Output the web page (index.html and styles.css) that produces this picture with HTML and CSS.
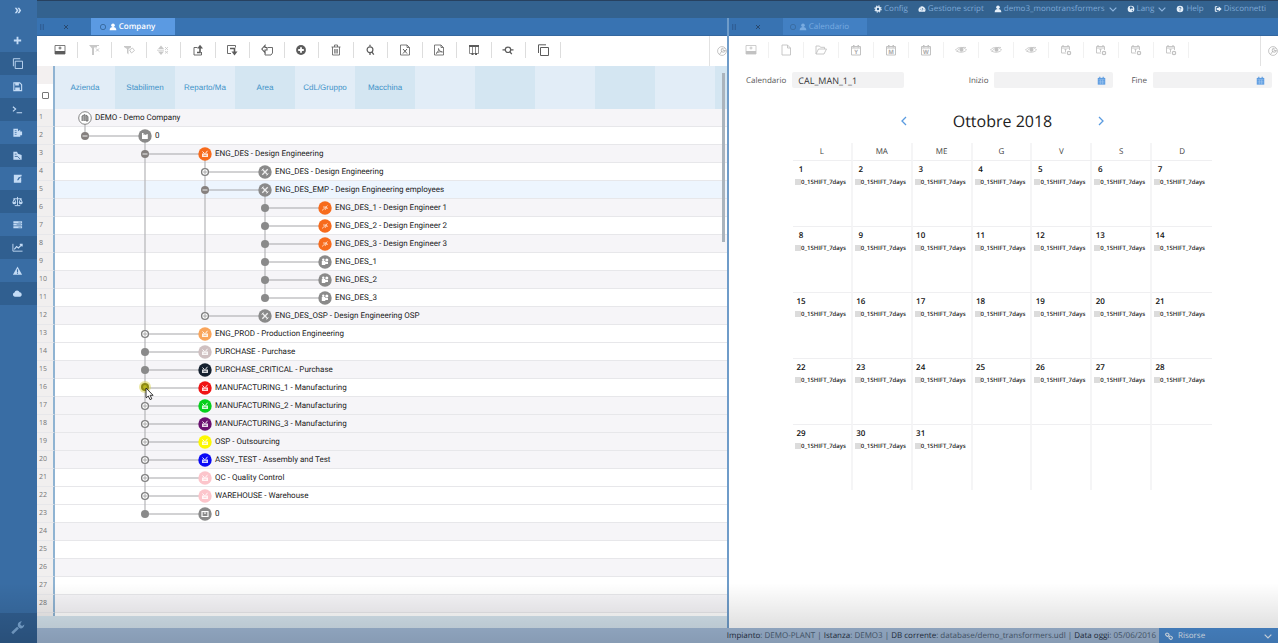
FILE: index.html
```html
<!DOCTYPE html>
<html lang="it">
<head>
    <meta charset="UTF-8">
    <meta name="viewport" content="width=device-width, initial-scale=1.0">
    <title>Company</title>
    <link rel="stylesheet" href="styles.css">
</head>
<body>

    <!-- Icon set -->
    <svg class="sprite" aria-hidden="true">
        <symbol id="i-expand" viewBox="0 0 12 12"><path d="M3 3h2l2 3-2 3H3l2-3zM6 3h2l2 3-2 3H6l2-3z" fill="currentColor"/></symbol>
        <symbol id="i-plus" viewBox="0 0 12 12"><path d="M5 2h2v3h3v2H7v3H5V7H2V5h3z" fill="currentColor"/></symbol>
        <symbol id="i-copy" viewBox="0 0 12 12"><path d="M3.500 3.500h8v8h-8zM1.500 9V.8H9" fill="none" stroke="currentColor"/></symbol>
        <symbol id="i-save" viewBox="0 0 12 12"><path d="M2 2h6.500L10.500 4v6.500H2z" fill="none" stroke="currentColor" stroke-width="1.200"/><path d="M3.500 2h4v3h-4zM3.500 7h5v3.500h-5z" fill="currentColor"/></symbol>
        <symbol id="i-term" viewBox="0 0 12 12"><path d="M1 3l3 2.500L1 8M5 9.500h6" fill="none" stroke="currentColor" stroke-width="1.200"/></symbol>
        <symbol id="i-plant" viewBox="0 0 12 12"><path d="M1.500 2h5v2.500L9 3v2h2v4H9v1.500H1.500z" fill="currentColor"/><path d="M3 4h2M3 6h2M3 8h2" stroke="#3a6ea6" stroke-width=".8"/></symbol>
        <symbol id="i-plantedit" viewBox="0 0 12 12"><path d="M1.500 2h4l1 2 4 1.500V10.500h-9z" fill="currentColor"/><path d="M3 4.500h2M3 7h3l3 3" stroke="#33608f" stroke-width=".9" fill="none"/></symbol>
        <symbol id="i-doc" viewBox="0 0 12 12"><path d="M2 2h8.500v1.500L7 5l-1.500 3H10v2.500H2z" fill="currentColor"/><path d="M7 8l2-3h1v4H7z" fill="currentColor"/></symbol>
        <symbol id="i-scale" viewBox="0 0 12 12"><path d="M6 1v9M3 10.500h6M1.500 3h9M2.500 3L.8 7h3.400zM9.500 3L7.800 7h3.400z" fill="none" stroke="currentColor"/><path d="M.5 7h4a2 2 0 0 1-4 0M7.500 7h4a2 2 0 0 1-4 0" fill="currentColor"/></symbol>
        <symbol id="i-server" viewBox="0 0 12 12"><path d="M1.500 2.500h9.500v2H1.500zM1.500 5.200h9.500v2H1.500zM1.500 8h9.500v2H1.500z" fill="currentColor"/><path d="M7 3.500h3M5 6.200h5M7 9h3" stroke="#3a6ea6" stroke-width=".6"/></symbol>
        <symbol id="i-chart" viewBox="0 0 12 12"><path d="M1 2v8h10.500" fill="none" stroke="currentColor"/><path d="M2.500 8L5 5l2 1.500L10.500 3M8.500 2.500H11V5" fill="none" stroke="currentColor" stroke-width="1.300"/></symbol>
        <symbol id="i-warn" viewBox="0 0 12 12"><path d="M6 1.500l5 9H1z" fill="currentColor"/><path d="M6 4.500v3M6 8.300v1.200" stroke="#3a6ea6" stroke-width="1.200"/></symbol>
        <symbol id="i-cloud" viewBox="0 0 12 12"><path d="M3 9.500a2.300 2.300 0 0 1-.3-4.500 3 3 0 0 1 5.600-.5A2.600 2.600 0 0 1 9 9.500z" fill="currentColor"/></symbol>
        <symbol id="i-wrench" viewBox="0 0 12 12"><path d="M1 10.500L6 5.700" stroke="currentColor" stroke-width="2.200" fill="none"/><path d="M11.500 3L9.500 4.300 8 3.200 8.300 1.500 9.500.5C7 0 5.300 2 6 4.500 7 7.300 11 7 11.500 3z" fill="currentColor"/></symbol>
        <symbol id="i-user" viewBox="0 0 12 12"><circle cx="6" cy="3.500" r="2.700" fill="currentColor"/><path d="M1 11c0-4 2-5 5-5s5 1 5 5z" fill="currentColor"/></symbol>
        <symbol id="i-gear" viewBox="0 0 12 12"><circle cx="6" cy="6" r="3" fill="none" stroke="currentColor" stroke-width="2.400"/><circle cx="6" cy="6" r="4.700" fill="none" stroke="currentColor" stroke-width="1.600" stroke-dasharray="1.900 1.800"/></symbol>
        <symbol id="i-gauge" viewBox="0 0 12 12"><path d="M1.500 10a5.200 5.200 0 1 1 9 0z" fill="currentColor"/><path d="M6 8.500l1-4M3 6.500h1M8.500 6.500h1M4 4l.7.7" stroke="#33628f" stroke-width="1"/></symbol>
        <symbol id="i-globe" viewBox="0 0 12 12"><circle cx="6" cy="6" r="5" fill="currentColor"/><path d="M4 3l2-1 3 2-1 2-2-1-1 2zM7 8l2-1-1 3z" fill="#33628f"/></symbol>
        <symbol id="i-help" viewBox="0 0 12 12"><circle cx="6" cy="6" r="5" fill="currentColor"/><path d="M4.500 4.800C4.500 2.800 7.600 3 7.500 4.700 7.400 5.800 6 5.800 6 7M6 8v1.300" fill="none" stroke="#33628f" stroke-width="1.200"/></symbol>
        <symbol id="i-exit" viewBox="0 0 12 12"><path d="M5 2.500H2v7h3" fill="none" stroke="currentColor" stroke-width="1.500"/><path d="M4 4.500h3V2l4.500 4L7 10V7.500H4z" fill="currentColor"/></symbol>
        <symbol id="i-down" viewBox="0 0 12 12"><path d="M1 4l5 5 5-5" fill="none" stroke="currentColor" stroke-width="1.800"/></symbol>
        <symbol id="i-left" viewBox="0 0 12 12"><path d="M8 2L4 6 8 10" fill="none" stroke="currentColor" stroke-width="1.300"/></symbol>
        <symbol id="i-right" viewBox="0 0 12 12"><path d="M4 2l4 4-4 4" fill="none" stroke="currentColor" stroke-width="1.300"/></symbol>
        <symbol id="i-close" viewBox="0 0 12 12"><path d="M3 3l6 6M9 3L3 9" stroke="currentColor" stroke-width="1.500"/></symbol>
        <symbol id="i-grip" viewBox="0 0 12 12"><path d="M3 2h2v2H3zM7 2h2v2H7zM3 5h2v2H3zM7 5h2v2H7zM3 8h2v2H3zM7 8h2v2H7z" fill="currentColor"/></symbol>
        <symbol id="i-ring" viewBox="0 0 12 12"><circle cx="6" cy="6" r="4" fill="none" stroke="currentColor" stroke-width="1.500"/></symbol>
        <symbol id="i-link" viewBox="0 0 12 12"><rect x="1" y="2" width="5" height="4" rx="1.800" transform="rotate(40 3.500 4)" fill="none" stroke="currentColor" stroke-width="1.600"/><rect x="6" y="6.500" width="5" height="4" rx="1.800" transform="rotate(40 8.500 8.500)" fill="none" stroke="currentColor" stroke-width="1.600"/><path d="M5 5l2.500 2.500" stroke="currentColor" stroke-width="1.400"/></symbol>
        <symbol id="i-tray" viewBox="0 0 12 12"><path d="M1 1.500h10v8.500H1z" fill="none" stroke="currentColor" stroke-width=".8"/><path d="M1 7h10v3H1z" fill="currentColor"/><path d="M6 2.500v3M4.500 4h3" stroke="currentColor" stroke-width=".9"/></symbol>
        <symbol id="i-filter" viewBox="0 0 12 12"><path d="M1 1h8v2.500H6V11H4V4.500z" fill="currentColor"/><path d="M8 4.500l3 3M11 4.500l-3 3M9 1.500h2" stroke="currentColor"/></symbol>
        <symbol id="i-filter2" viewBox="0 0 12 12"><path d="M1 2h7v1.500L5.500 5v5.500L4 9V5L1 3z" fill="currentColor"/><path d="M6.500 6l3-2 2 2.500-3 2.500z" fill="none" stroke="currentColor"/></symbol>
        <symbol id="i-collapse" viewBox="0 0 12 12"><path d="M1 5l3-3.500L7 5zM1 7.500h6L4 11z" fill="currentColor"/><path d="M8 3l3 3M11 3L8 6M8 7l3 2.500M11 7L8 9.500M0 6.200h7" stroke="currentColor" stroke-width=".8"/></symbol>
        <symbol id="i-outup" viewBox="0 0 12 12"><path d="M5.500 3.500H2v7.500h7.500V8" fill="none" stroke="currentColor" stroke-width=".9"/><path d="M5 8.500h3V4" fill="none" stroke="currentColor" stroke-width="1.600"/><path d="M5.200 4.500L8 .8 11 4.500z" fill="currentColor"/></symbol>
        <symbol id="i-indown" viewBox="0 0 12 12"><path d="M5 9.500H1.500V1.500H9.500v2" fill="none" stroke="currentColor" stroke-width=".9"/><path d="M4 4.500h4.500V8" fill="none" stroke="currentColor" stroke-width="1.600"/><path d="M5.500 7.500h6L8.500 11.500z" fill="currentColor"/></symbol>
        <symbol id="i-swap" viewBox="0 0 12 12"><path d="M7 3.500h4.500V9L10 11H4V8.500" fill="none" stroke="currentColor" stroke-width=".9"/><path d="M.8 5L4 1.500V3.500h2v2.500H4v2.500z" fill="none" stroke="currentColor" stroke-width="1.100"/></symbol>
        <symbol id="i-add" viewBox="0 0 12 12"><circle cx="6" cy="6" r="4.900" fill="currentColor"/><path d="M6 3.200v5.600M3.200 6h5.600" stroke="#fff" stroke-width="1.800"/></symbol>
        <symbol id="i-trash" viewBox="0 0 12 12"><path d="M1.500 3h9M4.500 3V1h3v2M2.500 3v8h7V3M4.700 5v4.500M6 5v4.500M7.300 5v4.500" fill="none" stroke="currentColor" stroke-width=".8"/></symbol>
        <symbol id="i-find" viewBox="0 0 12 12"><path d="M6 .8v1.500M6 9v2M7.800 7.800l2 2.800" stroke="currentColor" stroke-width="1.300"/><circle cx="6" cy="5.800" r="2.900" fill="none" stroke="currentColor" stroke-width="1.200"/></symbol>
        <symbol id="i-xls" viewBox="0 0 12 12"><path d="M1.500 1h6.500L10.500 3.500V11h-9zM8 1v2.500h2.500" fill="none" stroke="currentColor" stroke-width=".8"/><path d="M4 5l4 4.500M8 5L4 9.500" stroke="currentColor"/></symbol>
        <symbol id="i-pdf" viewBox="0 0 12 12"><path d="M1.500 1h6.500L10.500 3.500V11h-9zM8 1v2.500h2.500M3 9.500C5.500 7.500 6 5.500 5.500 4.500 5.500 7 8 7.500 9.500 8 7 7.300 5 8 3 9.500" fill="none" stroke="currentColor" stroke-width=".8"/></symbol>
        <symbol id="i-table" viewBox="0 0 12 12"><path d="M1.500 1.500h9V9.500h-9zM4.500 2v8M7.500 2v8" fill="none" stroke="currentColor" stroke-width=".7"/><path d="M1 1h10v2H1zM3.500 9h2v2h-2zM7 9h2v2H7z" fill="currentColor"/></symbol>
        <symbol id="i-findh" viewBox="0 0 12 12"><path d="M.5 5.800h3M8.500 5.800h3M7.800 7.800l2 2.300" stroke="currentColor" stroke-width="1.300"/><circle cx="6" cy="5.800" r="2.700" fill="none" stroke="currentColor" stroke-width="1.200"/></symbol>
        <symbol id="i-ball" viewBox="0 0 12 12"><circle cx="6" cy="6" r="5.300" fill="none" stroke="currentColor" stroke-width=".8"/><path d="M3 10l3-4M9 2.500L7 4.500 8 6l2-1A2.500 2.500 0 1 1 7.500 2.500" fill="none" stroke="currentColor" stroke-width=".9"/></symbol>
        <symbol id="i-file" viewBox="0 0 12 12"><path d="M2 1h5.500L10.500 4v7H2zM7.500 1v3h3" fill="none" stroke="currentColor" stroke-width=".9"/></symbol>
        <symbol id="i-folder" viewBox="0 0 12 12"><path d="M1 10V2h3.500l1 1.300H9.500V5M1 10l2.500-5h8L9 10z" fill="none" stroke="currentColor" stroke-width=".9"/></symbol>
        <symbol id="i-cal" viewBox="0 0 12 12"><path d="M1.500 2.500h9v8.500h-9zM1.500 4h9" fill="none" stroke="currentColor"/><path d="M3 1h1.500v2.500H3zM7.500 1H9v2.500H7.500z" fill="currentColor"/></symbol>
        <symbol id="i-calfull" viewBox="0 0 12 12"><path d="M1 2.500h10v9H1z" fill="currentColor"/><path d="M3 1h1.500v2.500H3zM7.500 1H9v2.500H7.500z" fill="currentColor"/><path d="M2 4.500h8M2 7h8M2 9.200h8M4.500 5v6M7.500 5v6" stroke="#b5d3f3" stroke-width=".6"/></symbol>
        <symbol id="i-eye" viewBox="0 0 12 12"><path d="M.5 6C3 2.500 9 2.500 11.500 6 9 9 3 9 .5 6z" fill="none" stroke="currentColor" stroke-width=".8"/><circle cx="6.500" cy="5.800" r="2" fill="currentColor"/><path d="M2 7.500C4 4 7 3 11 3.500" fill="none" stroke="currentColor" stroke-width=".8"/></symbol>
        <symbol id="i-calgo" viewBox="0 0 12 12"><path d="M9.500 6V2.500h-8v6.500H6M1.500 4h8M4.500 5.500h2M5.500 5.500V8" fill="none" stroke="currentColor" stroke-width=".9"/><path d="M3 1v2M8 1v2" stroke="currentColor" stroke-width="1.100"/><circle cx="9" cy="9" r="1.700" fill="none" stroke="currentColor" stroke-width="1.200"/></symbol>

        <!-- Tree nodes, white on a disc -->
        <symbol id="n-company" viewBox="0 0 14 14"><circle cx="7" cy="7" r="6.300" fill="#fff" stroke="#777" stroke-width=".9"/><path d="M4 10V5l3-1.500V10M8 10V4l2 1.500V10z" fill="#aaa" stroke="#666" stroke-width=".8"/></symbol>
        <symbol id="n-plant" viewBox="0 0 14 14"><circle cx="7" cy="7" r="6.700" fill="currentColor"/><path d="M4 4h1.500v2L7 5.200V6l2.800-1V10H4z" fill="#fff"/></symbol>
        <symbol id="n-dept" viewBox="0 0 14 14"><circle cx="7" cy="7" r="6.700" fill="currentColor"/><path d="M4 6.500h6V10H4z" fill="#fff" opacity=".85"/><path d="M4.500 4.500l2 2M9.500 3.800L7.300 6.500" stroke="#fff" stroke-width=".9"/><path d="M5.500 7.800h3v.8h-3z" fill="currentColor"/></symbol>
        <symbol id="n-area" viewBox="0 0 14 14"><circle cx="7" cy="7" r="6.700" fill="currentColor"/><path d="M4.300 4.300l5.400 5.400M9.700 4.300L4.300 9.700" stroke="#eee" stroke-width="1.300"/><path d="M3.500 5.500l2-2M8.500 10.500l2-2" stroke="#eee" stroke-width=".8"/></symbol>
        <symbol id="n-run" viewBox="0 0 14 14"><circle cx="7" cy="7" r="6.700" fill="currentColor"/><path d="M4 9.500l5.500-5M5 6h3.500L7 9M8 7l2 .3" stroke="#ffe3d2" stroke-width=".8" fill="none"/></symbol>
        <symbol id="n-machine" viewBox="0 0 14 14"><circle cx="7" cy="7" r="6.700" fill="currentColor"/><path d="M3.800 6h3.500v4H3.800zM7.300 7H10v2H7.300z" fill="#fff"/><circle cx="5.300" cy="4.700" r="1.200" fill="#fff"/><circle cx="8.800" cy="5" r="1.500" fill="#fff"/></symbol>
        <symbol id="n-box" viewBox="0 0 14 14"><circle cx="7" cy="7" r="6.700" fill="currentColor"/><path d="M4 4.500h6v5H4z" fill="none" stroke="#fff" stroke-width="1.200"/><path d="M5.500 5.500h3L7 7.300z" fill="#fff"/></symbol>
    </svg>

    <div class="app">
        <nav class="sidebar">
            <button class="side-toggle" aria-label="Espandi"><svg><use href="#i-expand"/></svg></button>
            <div class="side-list">
                <button aria-label="Nuovo"><svg><use href="#i-plus"/></svg></button>
                <button aria-label="Copia"><svg><use href="#i-copy"/></svg></button>
                <button aria-label="Salva"><svg><use href="#i-save"/></svg></button>
                <button aria-label="Console"><svg><use href="#i-term"/></svg></button>
                <button aria-label="Impianto"><svg><use href="#i-plant"/></svg></button>
                <button aria-label="Modifica impianto"><svg><use href="#i-plantedit"/></svg></button>
                <button aria-label="Documenti"><svg><use href="#i-doc"/></svg></button>
                <button aria-label="Bilanciamento"><svg><use href="#i-scale"/></svg></button>
                <button aria-label="Risorse"><svg><use href="#i-server"/></svg></button>
                <button aria-label="Grafici"><svg><use href="#i-chart"/></svg></button>
                <button aria-label="Avvisi"><svg><use href="#i-warn"/></svg></button>
                <button aria-label="Cloud"><svg><use href="#i-cloud"/></svg></button>
            </div>
            <button class="side-tools" aria-label="Strumenti"><svg><use href="#i-wrench"/></svg></button>
        </nav>

        <div class="main">
            <header class="topbar">
                <a href="#"><svg><use href="#i-gear"/></svg>Config</a>
                <a href="#"><svg><use href="#i-gauge"/></svg>Gestione script</a>
                <a href="#"><svg><use href="#i-user"/></svg>demo3_monotransformers<svg class="caret"><use href="#i-down"/></svg></a>
                <a href="#"><svg><use href="#i-globe"/></svg>Lang<svg class="caret"><use href="#i-down"/></svg></a>
                <a href="#"><svg><use href="#i-help"/></svg>Help</a>
                <a href="#"><svg><use href="#i-exit"/></svg>Disconnetti</a>
            </header>

            <div class="panels">
                <section class="panel panel-company">
                    <div class="tabs">
                        <svg class="grip"><use href="#i-grip"/></svg>
                        <button class="close" aria-label="Chiudi"><svg><use href="#i-close"/></svg></button>
                        <button class="tab active"><svg class="ring"><use href="#i-ring"/></svg><svg><use href="#i-user"/></svg>Company</button>
                    </div>
                    <div class="toolbar">
                        <div class="tools">
                            <button aria-label="Pannello"><svg><use href="#i-tray"/></svg></button>
                            <button aria-label="Filtro" disabled><svg><use href="#i-filter"/></svg></button>
                            <button aria-label="Rimuovi filtro" disabled><svg><use href="#i-filter2"/></svg></button>
                            <button aria-label="Comprimi" disabled><svg><use href="#i-collapse"/></svg></button>
                            <button aria-label="Esporta"><svg><use href="#i-outup"/></svg></button>
                            <button aria-label="Importa"><svg><use href="#i-indown"/></svg></button>
                            <button aria-label="Sposta"><svg><use href="#i-swap"/></svg></button>
                            <button aria-label="Aggiungi"><svg><use href="#i-add"/></svg></button>
                            <button aria-label="Elimina"><svg><use href="#i-trash"/></svg></button>
                            <button aria-label="Cerca"><svg><use href="#i-find"/></svg></button>
                            <button aria-label="Excel"><svg><use href="#i-xls"/></svg></button>
                            <button aria-label="PDF"><svg><use href="#i-pdf"/></svg></button>
                            <button aria-label="Colonne"><svg><use href="#i-table"/></svg></button>
                            <button aria-label="Cerca in riga"><svg><use href="#i-findh"/></svg></button>
                            <button aria-label="Duplica"><svg><use href="#i-copy"/></svg></button>
                        </div>
                        <button class="setup" aria-label="Impostazioni"><svg><use href="#i-ball"/></svg></button>
                    </div>
                    <div class="grid">
                        <div class="grid-head">
                            <div class="head-check"><input type="checkbox" aria-label="Seleziona tutto"></div>
                            <div class="head-cols">
                                <span>Azienda</span><span>Stabilimen</span><span>Reparto/Ma</span><span>Area</span>
                                <span>CdL/Gruppo</span><span>Macchina</span><span></span><span></span>
                                <span></span><span></span><span></span><span></span>
                            </div>
                        </div>
                        <div class="grid-body">
                            <table class="tree"><tbody id="tree"></tbody></table>
                        </div>
                        <div class="grid-foot"></div>
                        <div class="scroll-thumb"></div>
                    </div>
                </section>

                <section class="panel panel-calendar">
                    <div class="tabs">
                        <svg class="grip"><use href="#i-grip"/></svg>
                        <button class="close" aria-label="Chiudi"><svg><use href="#i-close"/></svg></button>
                        <button class="tab"><svg class="ring"><use href="#i-ring"/></svg><svg><use href="#i-user"/></svg>Calendario</button>
                    </div>
                    <div class="toolbar">
                        <div class="tools muted">
                            <button aria-label="Pannello"><svg><use href="#i-tray"/></svg></button>
                            <button aria-label="Nuovo"><svg><use href="#i-file"/></svg></button>
                            <button aria-label="Apri"><svg><use href="#i-folder"/></svg></button>
                            <button class="cal-tool"><svg><use href="#i-cal"/></svg><span>Y</span></button>
                            <button class="cal-tool"><svg><use href="#i-cal"/></svg><span>M</span></button>
                            <button class="cal-tool"><svg><use href="#i-cal"/></svg><span>W</span></button>
                            <button aria-label="Mostra turni"><svg><use href="#i-eye"/></svg></button>
                            <button aria-label="Mostra eccezioni"><svg><use href="#i-eye"/></svg></button>
                            <button aria-label="Mostra tutto"><svg><use href="#i-eye"/></svg></button>
                            <button aria-label="Giorno"><svg><use href="#i-calgo"/></svg></button>
                            <button aria-label="Settimana"><svg><use href="#i-calgo"/></svg></button>
                            <button aria-label="Mese"><svg><use href="#i-calgo"/></svg></button>
                            <button aria-label="Periodo"><svg><use href="#i-calgo"/></svg></button>
                        </div>
                        <button class="setup" aria-label="Impostazioni"><svg><use href="#i-ball"/></svg></button>
                    </div>
                    <form class="filters">
                        <label for="calendario">Calendario</label>
                        <input type="text" id="calendario" value="CAL_MAN_1_1">
                        <label for="inizio" class="push">Inizio</label>
                        <div class="date"><input type="text" id="inizio"><svg><use href="#i-calfull"/></svg></div>
                        <label for="fine">Fine</label>
                        <div class="date"><input type="text" id="fine"><svg><use href="#i-calfull"/></svg></div>
                    </form>
                    <div class="month">
                        <div class="month-head">
                            <button aria-label="Mese precedente"><svg><use href="#i-left"/></svg></button>
                            <h2>Ottobre 2018</h2>
                            <button aria-label="Mese successivo"><svg><use href="#i-right"/></svg></button>
                        </div>
                        <table class="days">
                            <thead>
                                <tr><th>L</th><th>MA</th><th>ME</th><th>G</th><th>V</th><th>S</th><th>D</th></tr>
                            </thead>
                            <tbody id="days"></tbody>
                        </table>
                    </div>
                </section>
            </div>

            <footer class="status">
                <p><b>Impianto</b>: DEMO-PLANT | <b>Istanza</b>: DEMO3 | <b>DB corrente</b>: database/demo_transformers.udl | <b>Data oggi</b>: 05/06/2016</p>
                <button class="resources"><svg><use href="#i-link"/></svg><span>Risorse</span><svg><use href="#i-down"/></svg></button>
            </footer>
        </div>
    </div>

    <script src="script.js"></script>
</body>
</html>
```

FILE: styles.css
```css
body {
    margin: 0;
    font-family: "Open Sans", "Noto Sans", sans-serif;
    font-size: 8px;
    color: #333;
    text-rendering: geometricPrecision;
}

button {
    margin: 0;
    padding: 0;
    border: none;
    background: none;
    font: inherit;
    color: inherit;
    text-rendering: inherit;
    cursor: pointer;
}

svg {
    width: 12px;
    height: 12px;
    flex: none;
}

.sprite {
    display: none;
}

.app {
    display: flex;
    height: 100vh;
    overflow: hidden;
}

/* Shade along the bottom of the window */
.app::after {
    content: "";
    position: absolute;
    left: 0;
    right: 0;
    bottom: 0;
    height: 60px;
    background: linear-gradient(rgba(0, 0, 0, 0), rgba(0, 0, 0, 0.16));
    pointer-events: none;
}

/* Left sidebar */
.sidebar {
    width: 37px;
    flex: none;
    display: flex;
    flex-direction: column;
    background: #396da4;
    color: #c3dbf5;
}

.sidebar button {
    display: flex;
    align-items: center;
    justify-content: center;
    width: 100%;
    height: 23px;
    box-sizing: border-box;
    padding-right: 2px;
}

.sidebar svg {
    width: 11px;
    height: 11px;
}

.sidebar .side-toggle {
    height: 20px;
    margin-bottom: 9px;
}

.side-list button:nth-child(even) {
    background: #305f90;
}

.sidebar .side-tools {
    height: 30px;
    margin-top: auto;
    background: #315f91;
    color: #7da9d6;
}

.sidebar .side-tools svg {
    width: 14px;
    height: 14px;
}

/* Main area */
.main {
    flex: 1;
    min-width: 0;
    display: flex;
    flex-direction: column;
}

.topbar {
    display: flex;
    justify-content: flex-end;
    align-items: center;
    gap: 10px;
    height: 18px;
    flex: none;
    box-sizing: border-box;
    padding: 0 12px 2px 0;
    background: #33628f;
    border-top: 1px solid #27415f;
}

.topbar a {
    display: flex;
    align-items: center;
    gap: 2px;
    color: #7fa9d6;
    text-decoration: none;
}

.topbar svg {
    width: 8px;
    height: 8px;
    color: #e6f0fa;
}

.topbar .caret {
    margin-left: 2px;
    color: #8db4de;
}

.panels {
    flex: 1;
    min-height: 0;
    display: flex;
}

.panel {
    min-width: 0;
    display: flex;
    flex-direction: column;
    background: #fff;
}

.panel-company {
    flex: 690;
}

.panel-calendar {
    flex: 549;
    border-left: 2px solid #6f9cc9;
}

.tabs {
    display: flex;
    height: 18px;
    flex: none;
    align-items: center;
    background: #3873b2;
    box-sizing: border-box;
    border-bottom: 1px solid #34679f;
}

.tabs .grip {
    width: 8px;
    height: 8px;
    margin-left: 1px;
    color: #2c5a8e;
}

.tabs .close {
    display: flex;
    margin-left: 16px;
    color: #28496f;
}

.tabs .close svg {
    width: 8px;
    height: 8px;
}

.tab {
    display: flex;
    align-items: center;
    justify-content: center;
    gap: 2px;
    align-self: stretch;
    width: 84px;
    margin-left: 21px;
    padding-right: 12px;
    box-sizing: border-box;
    background: #4280c3;
    color: #79abe0;
}

.tab svg {
    width: 8px;
    height: 8px;
}

.tab .ring {
    color: #3a6ea5;
}

.tab.active {
    background: #5b9ae2;
    color: #fff;
    font-weight: 600;
}

.toolbar {
    display: flex;
    justify-content: space-between;
    height: 30px;
    flex: none;
    overflow: hidden;
}

.tools {
    display: flex;
    align-items: center;
    width: 75%;
    height: 28px;
    margin-left: 6px;
    color: #5c5c5c;
}

.tools button {
    display: flex;
    align-items: center;
    justify-content: center;
    flex: 1;
    height: 16px;
    border-right: 1px solid #ddd;
}

.tools button:disabled {
    color: #c8c8c8;
}

.tools.muted {
    width: auto;
    margin-left: 5px;
    color: #c2c2c2;
}

.tools.muted button {
    flex: none;
    width: 35px;
    border-color: #f1f1f1;
}

.cal-tool span {
    position: absolute;
    padding-top: 3px;
    color: #aaa;
    font-size: 6px;
    font-weight: 700;
}

.setup {
    width: 18px;
    flex: none;
    display: flex;
    align-items: center;
    justify-content: flex-end;
    border-left: 1px solid #e2e2e2;
    color: #aaa;
}

.setup svg {
    width: 10px;
    height: 10px;
}

/* Company grid */
.grid {
    position: relative;
    flex: 1;
    min-height: 0;
    display: flex;
    flex-direction: column;
}

.grid-head {
    display: flex;
    height: 43px;
    flex: none;
    font-family: "Liberation Sans", Arial, sans-serif;
}

.head-check {
    width: 16px;
    flex: none;
    display: flex;
    align-items: center;
    justify-content: center;
    padding-top: 16px;
    border-right: 2px solid #8fb3d2;
    background: linear-gradient(#f3f0f0 18px, #fff 18px);
}

.head-check input {
    appearance: none;
    width: 7px;
    height: 7px;
    margin: 0;
    border: 1px solid #777;
    border-radius: 1px;
    background: #fff;
}

.head-cols {
    flex: 1;
    display: flex;
    overflow: hidden;
}

.head-cols span {
    width: 60px;
    flex: none;
    line-height: 43px;
    text-align: center;
    color: #3f92c8;
    background: #e2edf7;
}

.head-cols span:nth-child(even) {
    background: #d4e6f2;
}

.grid-body {
    flex: 1;
    min-height: 0;
    overflow: hidden;
    background: linear-gradient(to right, #f1efef 16px, #8fb3d2 16px, #8fb3d2 18px, #fff 18px);
}

.tree {
    width: 100%;
    border-spacing: 0;
    table-layout: fixed;
}

.tree td,
.tree th {
    height: 17px;
    padding: 0;
    border-bottom: 1px solid #e7e7ea;
    white-space: nowrap;
}

.tree th {
    width: 14px;
    padding-left: 2px;
    border-right: 2px solid #8fb3d2;
    background: #f1efef;
    color: #777;
    font-size: 7px;
    font-weight: 400;
    text-align: left;
}

.tree .shaded td {
    background: #f6f5f8;
}

.tree .current td {
    background: #edf5fe;
}

.node {
    display: flex;
    align-items: center;
    height: 17px;
    color: #222;
    font-family: Roboto, "Liberation Sans", sans-serif;
}

.node svg {
    position: relative;
    height: 18px;
    overflow: visible;
}

.grid-foot {
    height: 12px;
    flex: none;
    background: #d5e4ee;
}

.scroll-thumb {
    position: absolute;
    top: 7px;
    right: 2px;
    width: 3px;
    height: 30%;
    background: #aab4bd;
}

/* Calendar panel */
.filters {
    display: flex;
    align-items: center;
    gap: 6px;
    margin-top: 6px;
    padding: 0 6px 0 17px;
    color: #555;
}

.filters input {
    width: 112px;
    height: 16px;
    box-sizing: border-box;
    padding: 0 6px;
    border: none;
    border-radius: 2px;
    background: #f2f2f3;
    color: #333;
    font: 9px "Open Sans", sans-serif;
    text-rendering: inherit;
}

.filters .push {
    margin-left: auto;
}

.date {
    display: flex;
    align-items: center;
    margin-right: 12px;
    border-radius: 2px;
    background: #f2f2f3;
}

.date:last-child {
    margin-right: 0;
}

.filters .date input {
    width: 103px;
}

.date svg {
    width: 9px;
    height: 9px;
    margin-right: 7px;
    color: #5a9be0;
}

.month {
    margin: 19px 66px 0 64px;
}

.month-head {
    display: flex;
    align-items: center;
    justify-content: center;
    gap: 43px;
    height: 28px;
    margin-bottom: 8px;
}

.month-head h2 {
    margin: 0;
    color: #222;
    font-size: 16px;
    font-weight: 400;
}

.month-head button {
    display: flex;
    color: #5a9be0;
}

.days {
    width: 100%;
    border-spacing: 0;
    table-layout: fixed;
}

.days th,
.days td {
    padding: 0;
    border-right: 2px solid #f5f5f6;
}

.days th:last-child,
.days td:last-child {
    border-right: none;
}

.days th {
    height: 17px;
    font-weight: 400;
    color: #444;
}

.days td {
    height: 65px;
    border-top: 1px solid #efeff1;
    vertical-align: top;
}

.day {
    width: 16px;
    line-height: 12px;
    margin-top: 3px;
    text-align: center;
    color: #111;
    font-weight: 600;
}

.shift {
    display: flex;
    align-items: center;
    height: 12px;
    padding-left: 2px;
    color: #222;
    font-size: 6px;
    font-weight: 600;
    white-space: nowrap;
}

.shift::before {
    content: "";
    width: 6px;
    height: 6px;
    background: #dcdcdc;
}

/* Status bar */
.status {
    display: flex;
    justify-content: flex-end;
    height: 15px;
    flex: none;
    background: #a1b9d6;
    color: #4b5d73;
}

.status p {
    margin: 0 3px 0 0;
    line-height: 16px;
    white-space: nowrap;
}

.status b {
    font-weight: 400;
    color: #1f2e42;
}

.resources {
    display: flex;
    align-items: center;
    gap: 5px;
    width: 119px;
    box-sizing: border-box;
    padding: 0 6px;
    background: #4b8bd0;
    color: #e6f0fa;
    text-align: left;
}

.resources span {
    flex: 1;
}

.resources svg {
    width: 8px;
    height: 8px;
}
```

FILE: script.js
```js
const COL = 60;   // width of one level
const MID = 9;    // middle of a row
const TOTAL_ROWS = 28;
const GREY = '#8a8a8a';

// level, toggle, icon, colour, label
const nodes = [
    [0, '', 'company', GREY, 'DEMO - Demo Company'],
    [1, 'minus', 'plant', GREY, '0'],
    [2, 'minus', 'dept', '#f76b1c', 'ENG_DES - Design Engineering'],
    [3, 'plus', 'area', GREY, 'ENG_DES - Design Engineering'],
    [3, 'minus', 'area', GREY, 'ENG_DES_EMP - Design Engineering employees'],
    [4, 'leaf', 'run', '#f76b1c', 'ENG_DES_1 - Design Engineer 1'],
    [4, 'leaf', 'run', '#f76b1c', 'ENG_DES_2 - Design Engineer 2'],
    [4, 'leaf', 'run', '#f76b1c', 'ENG_DES_3 - Design Engineer 3'],
    [4, 'leaf', 'machine', GREY, 'ENG_DES_1'],
    [4, 'leaf', 'machine', GREY, 'ENG_DES_2'],
    [4, 'leaf', 'machine', GREY, 'ENG_DES_3'],
    [3, 'plus', 'area', GREY, 'ENG_DES_OSP - Design Engineering OSP'],
    [2, 'plus', 'dept', '#f9a55b', 'ENG_PROD - Production Engineering'],
    [2, 'leaf', 'dept', '#cfc0c1', 'PURCHASE - Purchase'],
    [2, 'leaf', 'dept', '#15202f', 'PURCHASE_CRITICAL - Purchase'],
    [2, 'hover', 'dept', '#f01414', 'MANUFACTURING_1 - Manufacturing'],
    [2, 'plus', 'dept', '#06d01c', 'MANUFACTURING_2 - Manufacturing'],
    [2, 'plus', 'dept', '#6b1070', 'MANUFACTURING_3 - Manufacturing'],
    [2, 'plus', 'dept', '#fdf800', 'OSP - Outsourcing'],
    [2, 'plus', 'dept', '#0a0af5', 'ASSY_TEST - Assembly and Test'],
    [2, 'plus', 'dept', '#fcc5cb', 'QC - Quality Control'],
    [2, 'plus', 'dept', '#fcc5cb', 'WAREHOUSE - Warehouse'],
    [2, 'leaf', 'box', GREY, '0']
];

const shaded = [1, 3, 6, 8, 10, 12, 15, 17, 18, 19, 20, 24, 26, 28];
const current = 5;

// Does the line under column k go on at row i?
function lineAt(i, k) {
    for (let j = i; j < nodes.length; j++) {
        if (nodes[j][0] <= k + 1) {
            return nodes[j][0] === k + 1;
        }
    }
    return false;
}

function drawToggle(type, x) {
    if (type === 'plus') {
        return `<circle cx="${x}" cy="${MID}" r="3.4" fill="#fff" stroke="#808080" stroke-width="1.4"/>
                <path d="M${x - 2} ${MID}h4M${x} ${MID - 2}v4" stroke="#999" stroke-width=".8"/>`;
    }
    if (type === 'minus') {
        return `<circle cx="${x}" cy="${MID}" r="4" fill="#85807e"/>
                <path d="M${x - 2.5} ${MID}h5" stroke="#ddd" stroke-width="1.2"/>`;
    }
    if (type === 'hover') {
        return `<circle cx="${x}" cy="${MID - 1}" r="6" fill="#d8d24a" opacity=".5"/>
                <circle cx="${x}" cy="${MID - 1}" r="4" fill="#8d8a14"/>
                <circle cx="${x}" cy="${MID - 1}" r="2" fill="#b9b51e"/>
                <path d="M${x + 1} ${MID}v10l2.3-2 1.7 3.6 1.8-.8-1.7-3.5h3z" fill="#fff" stroke="#222" stroke-width=".9"/>`;
    }
    return `<circle cx="${x}" cy="${MID}" r="4" fill="#8a8a8a"/>`;
}

function drawNode(i) {
    const [level, toggle, icon, color, label] = nodes[i];
    const cx = level * COL + COL / 2;
    let art = '';

    for (let k = 0; k <= level; k++) {
        const x = k * COL + COL / 2;
        const top = k < level && lineAt(i, k) ? 0 : MID;
        const bottom = lineAt(i + 1, k) ? 18 : MID;
        if (top !== bottom) {
            art += `<path d="M${x} ${top}V${bottom}" stroke="#b5b5b8" stroke-width="1.2"/>`;
        }
    }
    if (toggle) {
        art += `<path d="M${cx - COL} ${MID}H${cx}" stroke="#a5a5a8"/>`;
        art += drawToggle(toggle, cx - COL);
    }
    art += `<use href="#n-${icon}" x="${cx - 7}" y="${MID - 7}" width="14" height="14" color="${color}"/>`;

    return `<div class="node"><svg style="width: ${cx + 10}px">${art}</svg><span>${label}</span></div>`;
}

let rows = '';
for (let n = 1; n <= TOTAL_ROWS; n++) {
    const cls = n === current ? 'current' : shaded.includes(n) ? 'shaded' : '';
    rows += `<tr class="${cls}"><th>${n}</th><td>${n <= nodes.length ? drawNode(n - 1) : ''}</td></tr>`;
}
document.getElementById('tree').innerHTML = rows;

// October 2018 starts on a Monday
let weeks = '';
for (let first = 1; first <= 31; first += 7) {
    weeks += '<tr>';
    for (let d = first; d < first + 7; d++) {
        weeks += d <= 31 ? `<td><div class="day">${d}</div><div class="shift">0_1SHIFT_7days</div></td>` : '<td></td>';
    }
    weeks += '</tr>';
}
document.getElementById('days').innerHTML = weeks;
```
